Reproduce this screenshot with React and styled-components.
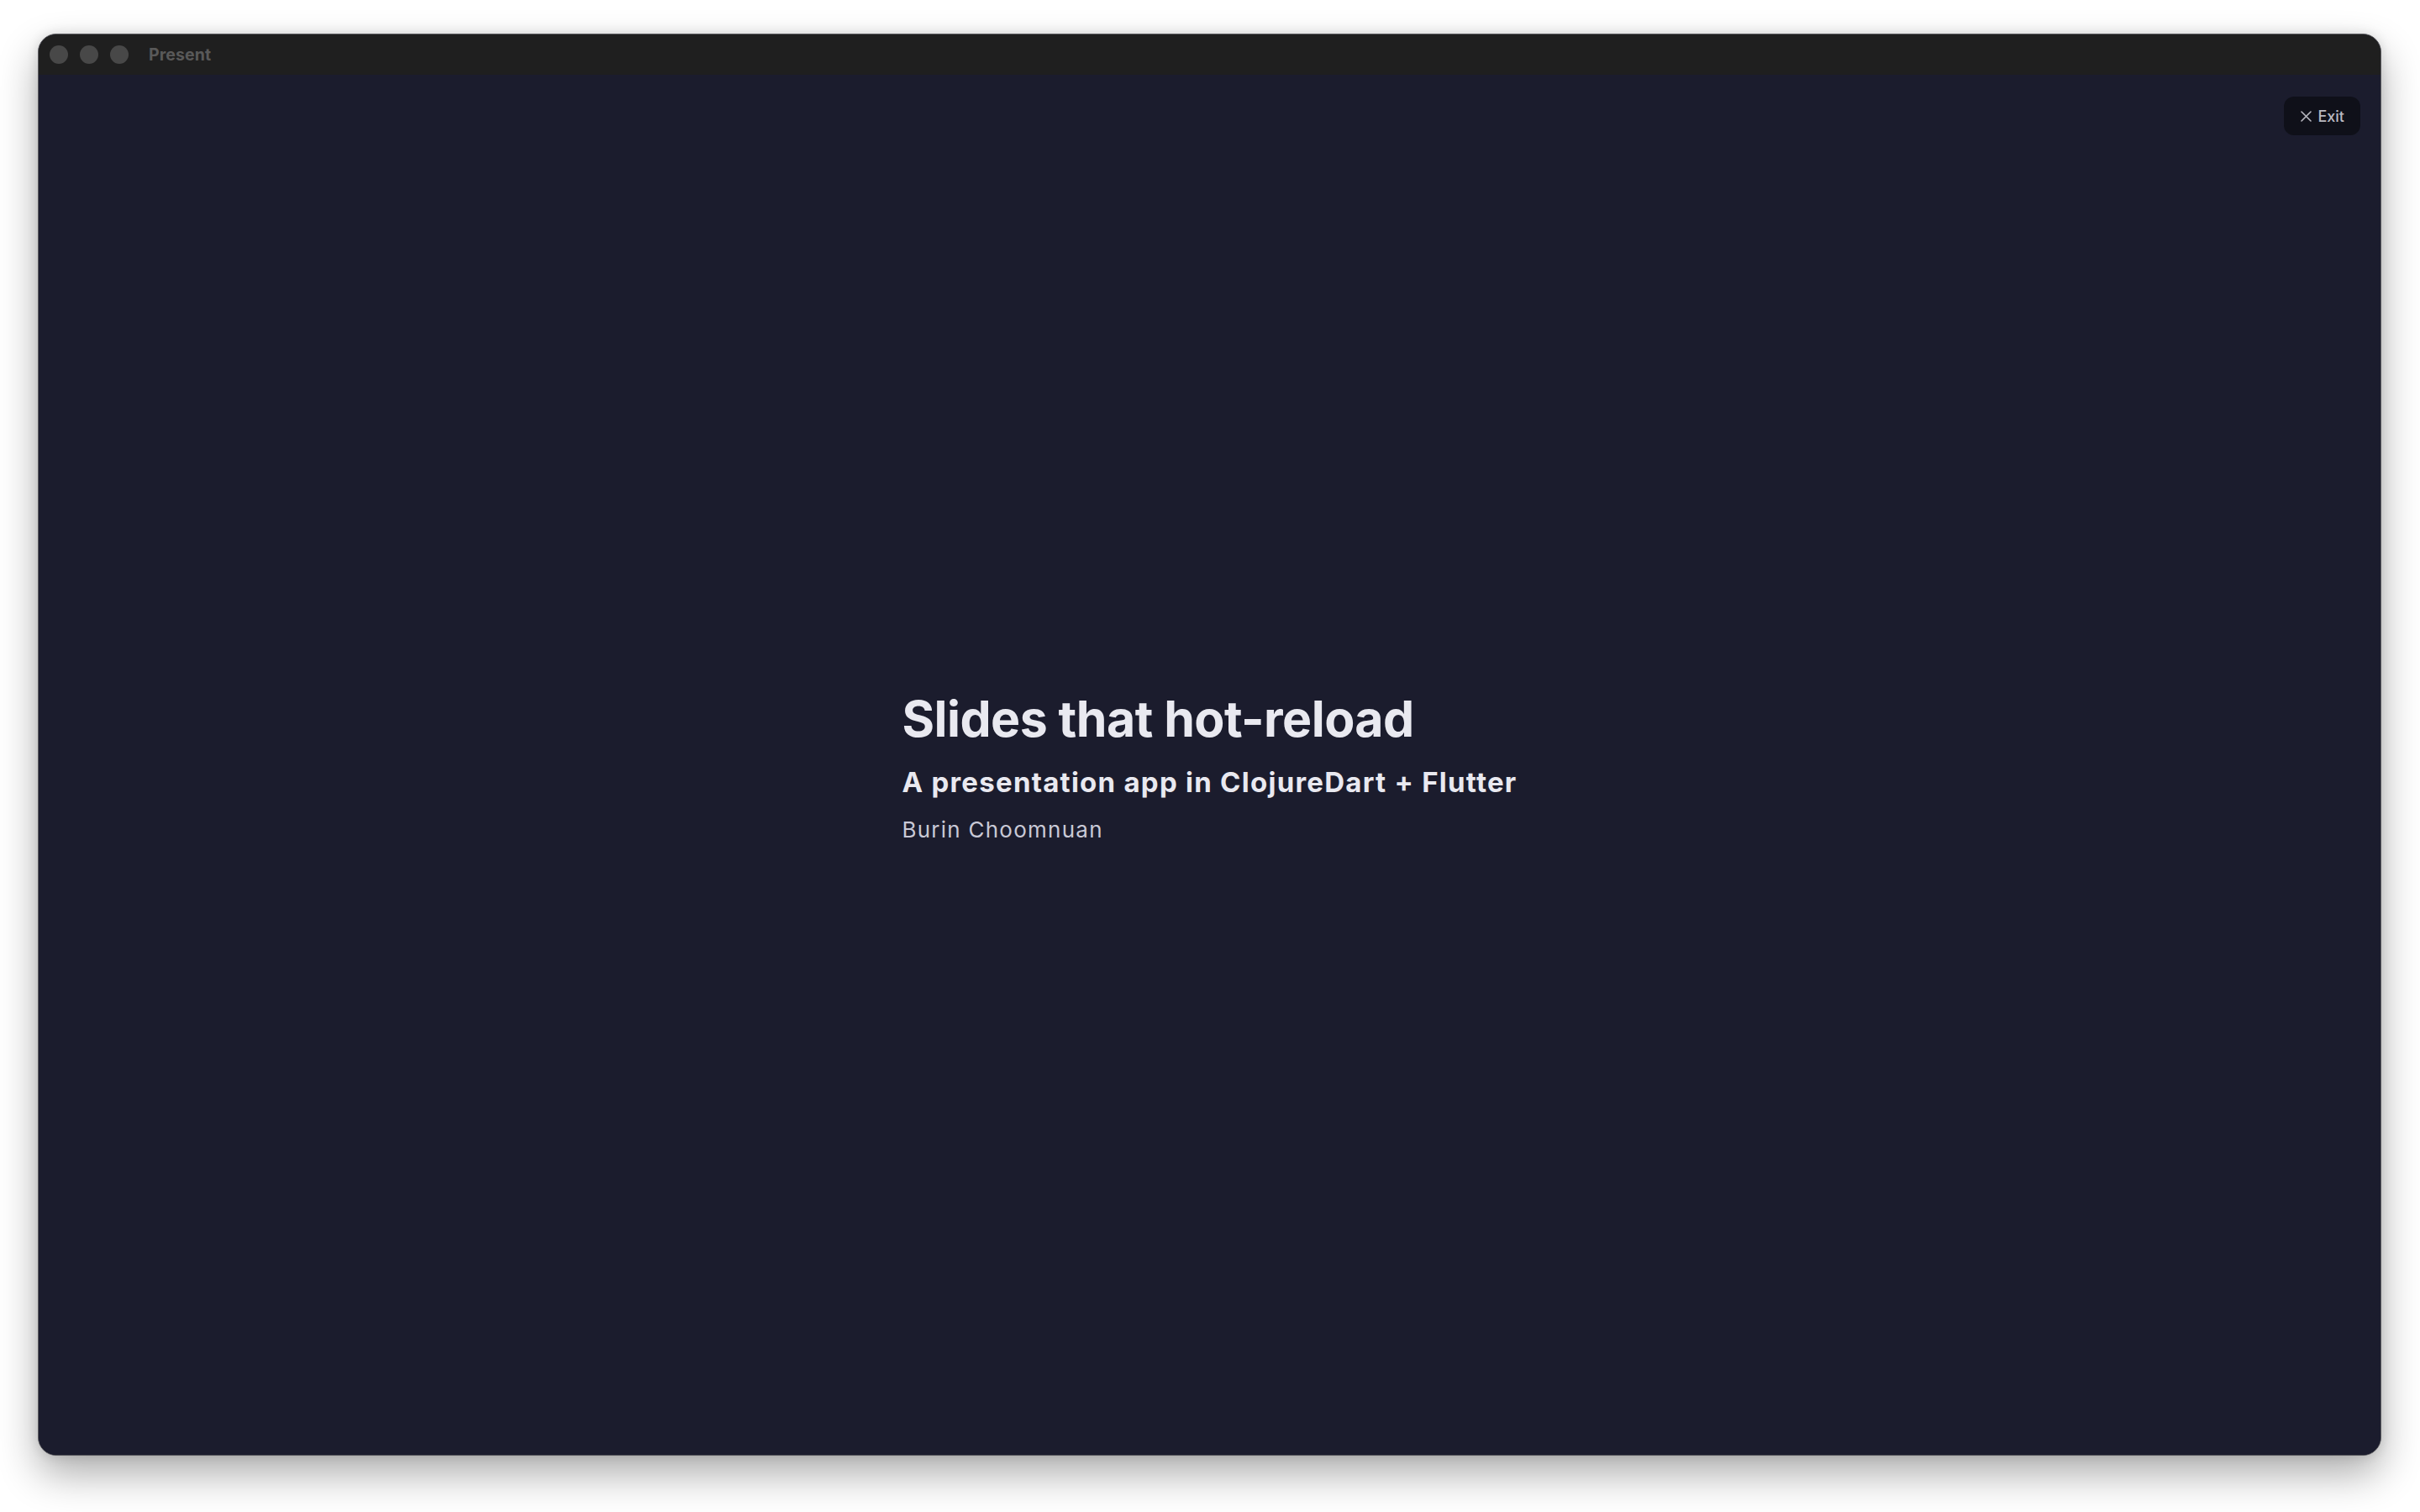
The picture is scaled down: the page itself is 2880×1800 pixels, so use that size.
import React from "react";
import styled, { createGlobalStyle } from "styled-components";

const GlobalStyle = createGlobalStyle`
  html, body {
    margin: 0;
    padding: 0;
    background: #ffffff;
  }
  body {
    font-family: Inter, "Noto Sans", "Liberation Sans", sans-serif;
    -webkit-font-smoothing: antialiased;
  }
`;

const Desktop = styled.div`
  width: 2880px;
  height: 1800px;
  box-sizing: border-box;
  padding: 40px 46px 67px 45px;
  display: flex;
  background: #ffffff;
`;

const Window = styled.div`
  flex: 1;
  display: flex;
  flex-direction: column;
  border-radius: 22px;
  overflow: hidden;
  border: 1px solid #5e5e62;
  background: #1b1c2d;
  box-shadow: 0 22px 48px rgba(0, 0, 0, 0.32), 0 0 14px rgba(0, 0, 0, 0.12);
`;

const TitleBar = styled.div`
  height: 48px;
  flex: none;
  display: flex;
  align-items: center;
  padding-left: 13px;
  background: #1f1f1f;
`;

const Lights = styled.div`
  display: flex;
  gap: 14px;
  margin-right: 24px;
`;

const Light = styled.span`
  width: 22px;
  height: 22px;
  border-radius: 50%;
  background: #484848;
`;

const WindowTitle = styled.span`
  font-size: 19.5px;
  font-weight: 700;
  color: #595959;
  letter-spacing: 0.1px;
`;

const Stage = styled.div`
  position: relative;
  flex: 1;
  display: flex;
  align-items: center;
  justify-content: center;
  background: #1b1c2d;
`;

const ExitButton = styled.button`
  position: absolute;
  top: 26px;
  right: 24px;
  height: 46px;
  padding: 0 19px 0 20px;
  display: flex;
  align-items: center;
  gap: 7px;
  border: none;
  border-radius: 12px;
  background: #0f1019;
  color: #b9b9c1;
  font-family: Inter, "Noto Sans", sans-serif;
  font-size: 18px;
  font-weight: 500;
  cursor: pointer;
`;

const Slide = styled.div`
  display: flex;
  flex-direction: column;
  align-items: flex-start;
  margin-top: 3px;
`;

const Heading = styled.h1`
  margin: 0;
  font-size: 59px;
  line-height: 72px;
  font-weight: 700;
  color: #e9e9f0;
  letter-spacing: -0.55px;
`;

const Subheading = styled.h2`
  margin: 19px 0 0;
  font-size: 33px;
  line-height: 40px;
  font-weight: 700;
  color: #e9e9f0;
  letter-spacing: 1.25px;
`;

const Author = styled.p`
  margin: 20px 0 0;
  font-size: 26px;
  line-height: 34px;
  font-weight: 400;
  color: #c9c9d6;
  letter-spacing: 1.25px;
`;

function CloseIcon() {
  return (
    <svg width="13" height="13" viewBox="0 0 13 13" fill="none">
      <path
        d="M1 1L12 12M12 1L1 12"
        stroke="currentColor"
        strokeWidth="1.6"
        strokeLinecap="round"
      />
    </svg>
  );
}

export default function App() {
  return (
    <>
      <GlobalStyle />
      <Desktop>
        <Window>
          <TitleBar>
            <Lights>
              <Light />
              <Light />
              <Light />
            </Lights>
            <WindowTitle>Present</WindowTitle>
          </TitleBar>
          <Stage>
            <ExitButton>
              <CloseIcon />
              Exit
            </ExitButton>
            <Slide>
              <Heading>Slides that hot-reload</Heading>
              <Subheading>A presentation app in ClojureDart + Flutter</Subheading>
              <Author>Burin Choomnuan</Author>
            </Slide>
          </Stage>
        </Window>
      </Desktop>
    </>
  );
}
